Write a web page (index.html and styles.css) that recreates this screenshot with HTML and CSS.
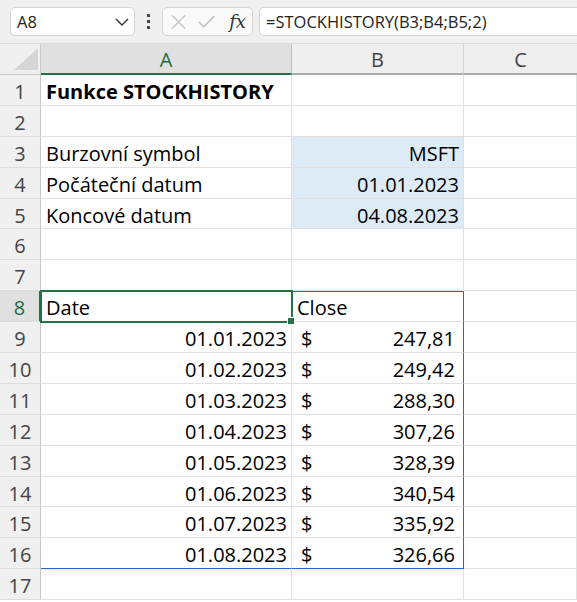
FILE: index.html
```html
<!DOCTYPE html>
<html>
<head>
<meta charset="utf-8">
<link rel="stylesheet" href="styles.css">
</head>
<body>
<div class="toolbar">
  <div class="namebox"><span>A8</span>
    <svg class="chev" width="14" height="8" viewBox="0 0 14 8"><path d="M1 1 L7 7 L13 1" fill="none" stroke="#333" stroke-width="1.4"/></svg>
  </div>
  <div class="dots"><i></i><i></i><i></i></div>
  <div class="fxbox">
    <svg width="16" height="16" viewBox="0 0 16 16"><path d="M1 1 L15 15 M15 1 L1 15" stroke="#bdbdbd" stroke-width="1.4" fill="none"/></svg>
    <svg width="18" height="14" viewBox="0 0 18 14"><path d="M1 7 L6 12 L17 1" stroke="#bdbdbd" stroke-width="1.4" fill="none"/></svg>
    <span class="fx">fx</span>
  </div>
  <div class="formula">=STOCKHISTORY(B3;B4;B5;2)</div>
</div>
<div class="sheet">
  <div class="corner"><svg width="36" height="30" viewBox="0 0 36 30"><path d="M34 4 L34 26 L10 26 Z" fill="#d6d6d6"/></svg></div>
  <div class="colh sel">A</div>
  <div class="colh">B</div>
  <div class="colh last">C</div>

  <div class="rowh">1</div><div class="c bold">Funkce STOCKHISTORY</div><div class="c"></div><div class="c"></div>
  <div class="rowh">2</div><div class="c"></div><div class="c"></div><div class="c"></div>
  <div class="rowh">3</div><div class="c">Burzovní symbol</div><div class="c r fill">MSFT</div><div class="c"></div>
  <div class="rowh">4</div><div class="c">Počáteční datum</div><div class="c r fill">01.01.2023</div><div class="c"></div>
  <div class="rowh">5</div><div class="c">Koncové datum</div><div class="c r fill">04.08.2023</div><div class="c"></div>
  <div class="rowh">6</div><div class="c"></div><div class="c"></div><div class="c"></div>
  <div class="rowh">7</div><div class="c"></div><div class="c"></div><div class="c"></div>
  <div class="rowh selr">8</div><div class="c active">Date<span class="handle"></span></div><div class="c tb ttop">Close</div><div class="c"></div>
  <div class="rowh">9</div><div class="c r">01.01.2023</div><div class="c acc tb"><span>$</span><span>247,81</span></div><div class="c"></div>
  <div class="rowh">10</div><div class="c r">01.02.2023</div><div class="c acc tb"><span>$</span><span>249,42</span></div><div class="c"></div>
  <div class="rowh">11</div><div class="c r">01.03.2023</div><div class="c acc tb"><span>$</span><span>288,30</span></div><div class="c"></div>
  <div class="rowh">12</div><div class="c r">01.04.2023</div><div class="c acc tb"><span>$</span><span>307,26</span></div><div class="c"></div>
  <div class="rowh">13</div><div class="c r">01.05.2023</div><div class="c acc tb"><span>$</span><span>328,39</span></div><div class="c"></div>
  <div class="rowh">14</div><div class="c r">01.06.2023</div><div class="c acc tb"><span>$</span><span>340,54</span></div><div class="c"></div>
  <div class="rowh">15</div><div class="c r">01.07.2023</div><div class="c acc tb"><span>$</span><span>335,92</span></div><div class="c"></div>
  <div class="rowh">16</div><div class="c r tbot">01.08.2023</div><div class="c acc tb tbot"><span>$</span><span>326,66</span></div><div class="c"></div>
  <div class="rowh">17</div><div class="c"></div><div class="c"></div><div class="c"></div>
</div>
</body>
</html>
```
FILE: styles.css
```css
* { box-sizing: border-box; }
html, body { margin: 0; padding: 0; background: #fff; overflow: hidden; }
body { width: 577px; height: 602px; font-family: "Open Sans", "Liberation Sans", sans-serif; }

.toolbar {
  height: 44px;
  background: #f0f0f0;
  display: flex;
  align-items: flex-start;
  padding: 7px 0 0 10px;
  border-bottom: 1px solid #dadada;
}
.namebox {
  width: 125px; height: 29px;
  background: #fff;
  border: 1px solid #d4d4d4;
  border-radius: 5px;
  display: flex; align-items: center; justify-content: space-between;
  padding: 0 5px 0 6px;
  font-size: 16.5px; color: #222;
}
.dots {
  width: 27px; height: 29px;
  display: flex; flex-direction: column; align-items: center; justify-content: center; gap: 3px;
}
.dots i { display: block; width: 3px; height: 3px; background: #444; }
.fxbox {
  width: 91px; height: 29px;
  background: #fafafa;
  border: 1px solid #d4d4d4;
  border-radius: 5px;
  display: flex; align-items: center;
  padding: 0 6px 0 8px; gap: 12px;
}
.fx { font-family: "DejaVu Serif", "Liberation Serif", serif; font-style: italic; font-size: 18px; color: #333; margin-left: 2px; }
.formula {
  margin-left: 6px;
  flex: 1; height: 29px;
  background: #fff;
  border: 1px solid #d4d4d4; border-right: none;
  border-radius: 5px 0 0 5px;
  display: flex; align-items: center;
  padding-left: 6px;
  font-size: 16.5px; color: #222;
}

.sheet {
  display: grid;
  grid-template-columns: 41px 251px 172px 1fr;
  grid-template-rows: 31px repeat(17, 30.9px);
  font-size: 20px; color: #000;
}
.corner { background: #f0f0f0; border-right: 1px solid #c8c8c8; border-bottom: 1px solid #c8c8c8; display: flex; align-items: center; justify-content: flex-end; }
.colh {
  background: #efefef;
  border-right: 1px solid #d4d4d4;
  border-bottom: 2px solid #adadad;
  display: flex; align-items: center; justify-content: center;
  padding-top: 1px;
  color: #444; font-size: 20px;
}
.colh.sel { background: #e0e0e0; color: #1d6b41; border-bottom: 2px solid #217346; border-right-color: #bdbdbd; }
.colh.last { border-right: none; }
.rowh {
  background: #f0f0f0;
  border-right: 1px solid #c8c8c8;
  border-bottom: 1px solid #dcdcdc;
  display: flex; align-items: center; justify-content: center;
  padding-top: 3px;
  color: #444; font-size: 20px;
}
.rowh.selr { background: #e0e0e0; color: #1d6b41; border-right: 2px solid #217346; }
.c {
  border-right: 1px solid #e1e1e1;
  border-bottom: 1px solid #e1e1e1;
  display: flex; align-items: center;
  padding: 3px 4px 0 5px;
  white-space: nowrap;
  position: relative;
}
.bold { font-weight: bold; }
.r { justify-content: flex-end; }
.fill { background: #ddebf7; }
.acc { justify-content: space-between; padding: 3px 8px 0 9px; }
.tb { border-right: 1px solid #2b66c4; }
.ttop { border-top: 1px solid #2b66c4; padding-top: 1px; }
.tbot { border-bottom: 1px solid #2b66c4; box-shadow: 0 3px 4px -2px rgba(0,0,0,0.12); }
.active { outline: 2px solid #217346; outline-offset: -1px; z-index: 2; }
.handle { position: absolute; right: -4px; bottom: -4px; width: 6px; height: 6px; background: #217346; border: 1px solid #fff; box-sizing: content-box; }
```
